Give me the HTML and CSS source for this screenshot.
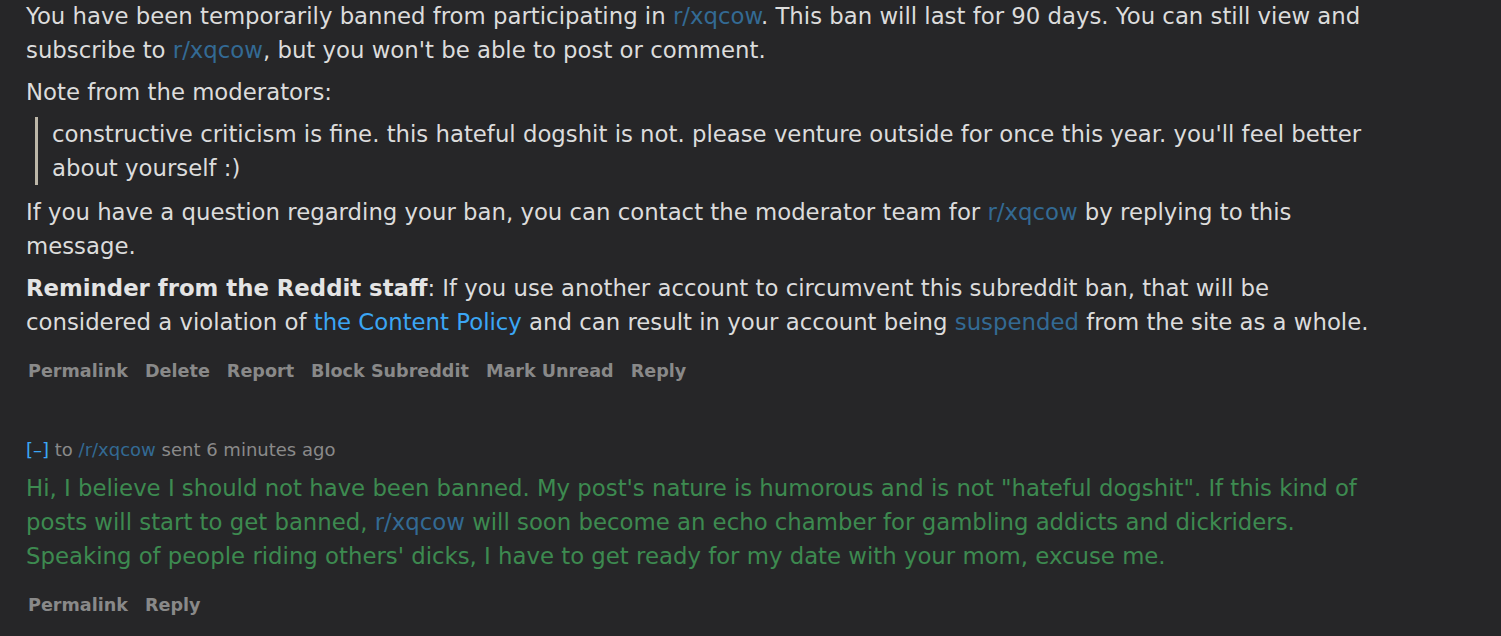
FILE: index.html
```html
<!DOCTYPE html>
<html>
<head>
<meta charset="utf-8">
<link rel="stylesheet" href="styles.css">
</head>
<body>
<div class="page">
  <div class="message">
    <div class="md">
      <p>You have been temporarily banned from participating in <a class="sub" href="#">r/xqcow</a>. This ban will last for 90 days. You can still view and subscribe to <a class="sub" href="#">r/xqcow</a>, but you won't be able to post or comment.</p>
      <p>Note from the moderators:</p>
      <blockquote><p>constructive criticism is fine. this hateful dogshit is not. please venture outside for once this year. you'll feel better about yourself :)</p></blockquote>
      <p>If you have a question regarding your ban, you can contact the moderator team for <a class="sub" href="#">r/xqcow</a> by replying to this message.</p>
      <p><strong>Reminder from the Reddit staff</strong>: If you use another account to circumvent this subreddit ban, that will be considered a violation of <a class="bright" href="#">the Content Policy</a> and can result in your account being <a class="sub" href="#">suspended</a> from the site as a whole.</p>
    </div>
    <ul class="actions">
      <li>Permalink</li><li>Delete</li><li>Report</li><li>Block Subreddit</li><li>Mark Unread</li><li>Reply</li>
    </ul>
  </div>
  <div class="message reply">
    <div class="tagline"><span class="toggle">[–]</span> to <a class="sub" href="#">/r/xqcow</a> sent 6 minutes ago</div>
    <div class="md green">
      <p>Hi, I believe I should not have been banned. My post's nature is humorous and is not "hateful dogshit". If this kind of posts will start to get banned, <a class="sub" href="#">r/xqcow</a> will soon become an echo chamber for gambling addicts and dickriders. Speaking of people riding others' dicks, I have to get ready for my date with your mom, excuse me.</p>
    </div>
    <ul class="actions">
      <li>Permalink</li><li>Reply</li>
    </ul>
  </div>
</div>
</body>
</html>
```
FILE: styles.css
```css
html, body {
  margin: 0;
  padding: 0;
  background: #262628;
}
body {
  font-family: "DejaVu Sans", Verdana, sans-serif;
  color: #dcdcdc;
  overflow: hidden;
  height: 636px;
}
.page {
  padding: 0 0 0 26px;
  width: 1362px;
  margin-top: -1px;
}
.md {
  font-size: 22.8px;
  line-height: 34px;
}
.md p {
  margin: 0 0 8px 0;
}
.md a {
  text-decoration: none;
}
.sub {
  color: #336a94;
}
.bright {
  color: #3ba6f5;
}
strong {
  font-weight: bold;
  color: #e4e4e4;
}
blockquote {
  margin: 0 0 10px 9px;
  padding-left: 14px;
  border-left: 3px solid #bcb6a8;
}
blockquote p {
  margin: 0 !important;
}
.actions {
  list-style: none;
  margin: 20px 0 0 2px;
  padding: 0;
  display: flex;
  gap: 17px;
  font-size: 17.6px;
  font-weight: bold;
  color: #898989;
  line-height: 24px;
}
.reply {
  margin-top: 55px;
}
.tagline {
  font-size: 18px;
  color: #8a8a8a;
  line-height: 24px;
  margin-bottom: 9px;
}
.tagline .sub {
  text-decoration: none;
}
.toggle {
  color: #3ba6f5;
}
.green {
  color: #3d8a50;
}
```
